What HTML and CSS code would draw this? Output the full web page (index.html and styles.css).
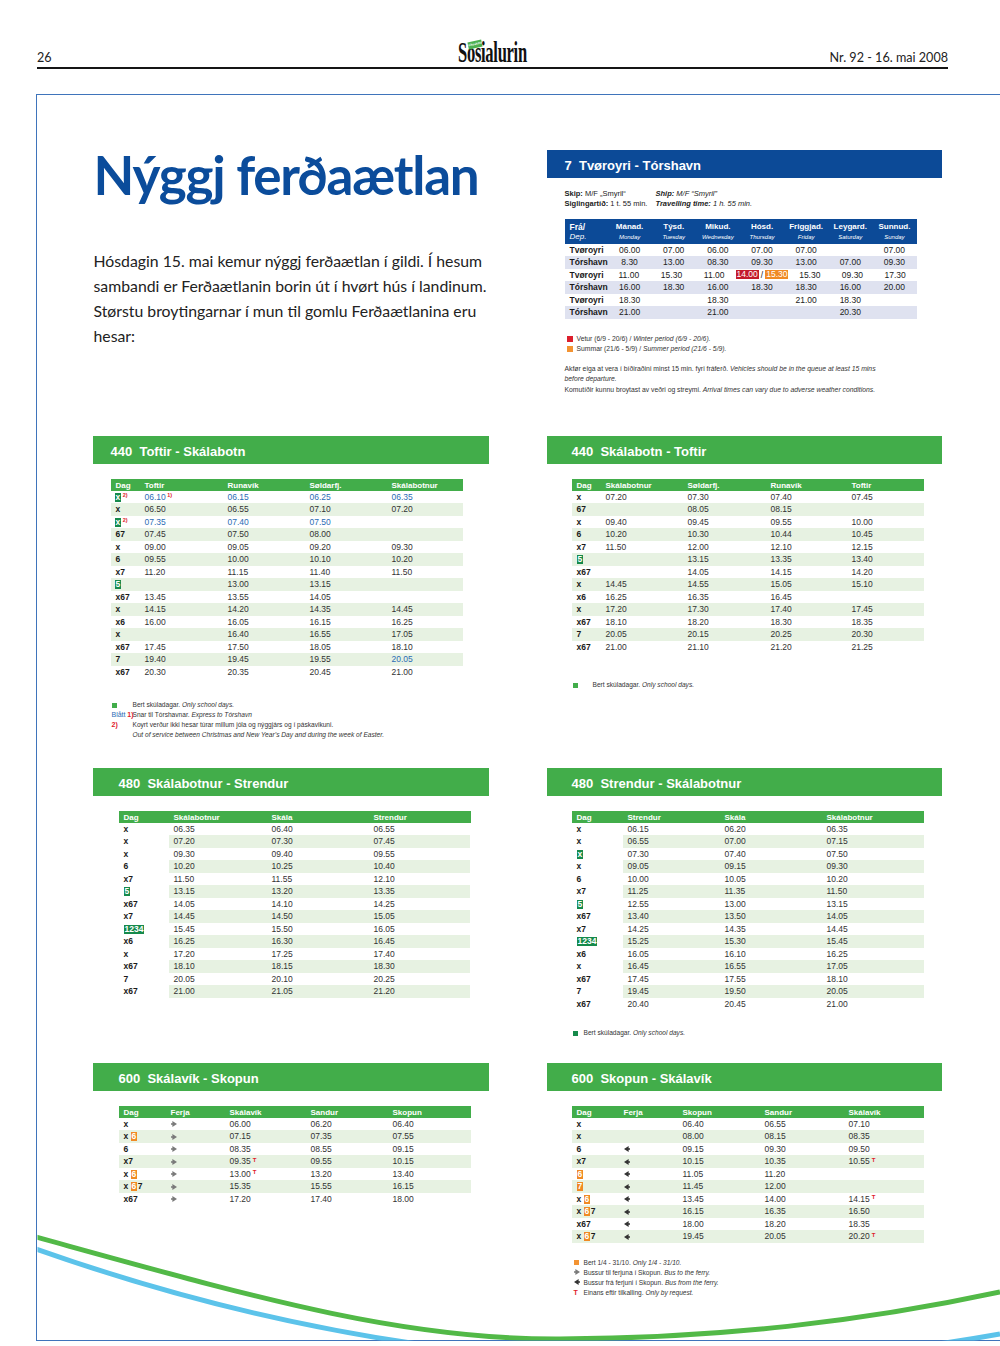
FILE: index.html
```html
<!DOCTYPE html>
<html lang="fo">
<head>
<meta charset="utf-8">
<title>Nýggj ferðaætlan</title>
<link rel="stylesheet" href="styles.css">
</head>
<body>
<div class="page">
  <header class="top">
    <span class="pno">26</span>
    <div class="logo"><span class="logo-word">Sosialurin</span><span class="logo-tag">Vikuskiftis</span></div>
    <span class="issue">Nr. 92 - 16. mai 2008</span>
  </header>

  <main class="frame">
    <div class="grid">
      <!-- intro -->
      <section class="intro">
        <h1 class="title">Nýggj ferðaætlan</h1>
        <p class="lead">Hósdagin 15. mai kemur nýggj ferðaætlan í gildi. Í hesum<br>sambandi er Ferðaætlanin borin út í hvørt hús í landinum.<br>Størstu broytingarnar í mun til gomlu Ferðaætlanina eru<br>hesar:</p>
      </section>

      <!-- ferry -->
      <section class="ferry">
        <div class="bar blue pad18">7  Tvøroyri - Tórshavn</div>
        <div class="inner">
          <div class="skip">
            <span><b>Skip:</b> M/F „Smyril“</span><span class="it"><b>Ship:</b> M/F “Smyril”</span>
            <span><b>Siglingartíð:</b> 1 t. 55 min.</span><span class="it"><b>Travelling time:</b> 1 h. 55 min.</span>
          </div>
          <div class="ft">
            <div class="hd">
              <span class="c0">Frá/<i>Dep.</i></span>
              <span>Mánad.<i>Monday</i></span>
              <span>Týsd.<i>Tuesday</i></span>
              <span>Mikud.<i>Wednesday</i></span>
              <span>Hósd.<i>Thursday</i></span>
              <span>Friggjad.<i>Friday</i></span>
              <span>Leygard.<i>Saturday</i></span>
              <span>Sunnud.<i>Sunday</i></span>
            </div>
            <div class="rows">
              <div class="r"><span class="c">Tvøroyri</span><span>06.00</span><span>07.00</span><span>06.00</span><span>07.00</span><span>07.00</span><span></span><span>07.00</span></div>
              <div class="r"><span class="c">Tórshavn</span><span>8.30</span><span>13.00</span><span>08.30</span><span>09.30</span><span>13.00</span><span>07.00</span><span>09.30</span></div>
              <div class="r"><span class="c">Tvøroyri</span><span>11.00</span><span>15.30</span><span>11.00</span><span class="wide"><span class="hl red">14.00</span>/<span class="hl org">15.30</span></span><span>15.30</span><span>09.30</span><span>17.30</span></div>
              <div class="r"><span class="c">Tórshavn</span><span>16.00</span><span>18.30</span><span>16.00</span><span>18.30</span><span>18.30</span><span>16.00</span><span>20.00</span></div>
              <div class="r"><span class="c">Tvøroyri</span><span>18.30</span><span></span><span>18.30</span><span></span><span>21.00</span><span>18.30</span><span></span></div>
              <div class="r"><span class="c">Tórshavn</span><span>21.00</span><span></span><span>21.00</span><span></span><span></span><span>20.30</span><span></span></div>
            </div>
          </div>
          <div class="lg">
            <div class="l"><span class="sq sq-red"></span><span>Vetur (6/9 - 20/6) / <i>Winter period (6/9 - 20/6).</i></span></div>
            <div class="l"><span class="sq sq-org"></span><span>Summar (21/6 - 5/9) / <i>Summer period (21/6 - 5/9).</i></span></div>
          </div>
          <div class="notes">
            <p>Akfør eiga at vera í bíðiraðini minst 15 min. fyri fráferð. <i>Vehicles should be in the queue at least 15 mins<br>before departure.</i></p>
            <p class="n2">Komutíðir kunnu broytast av veðri og streymi. <i>Arrival times can vary due to adverse weather conditions.</i></p>
          </div>
        </div>
      </section>

      <!-- 440 left -->
      <section class="route">
        <div class="bar green pad18">440  Toftir - Skálabotn</div>
        <div class="tb g440l ml18 stripe-all">
          <div class="r hd"><span class="c">Dag</span><span class="c">Toftir</span><span class="c">Runavík</span><span class="c">Søldarfj.</span><span class="c">Skálabotnur</span></div>
          <div class="rows">
            <div class="r"><span class="c d"><span class="bg">x</span><span class="sup">2)</span></span><span class="c bl">06.10<span class="sup">1)</span></span><span class="c bl">06.15</span><span class="c bl">06.25</span><span class="c bl">06.35</span></div>
            <div class="r"><span class="c d">x</span><span class="c">06.50</span><span class="c">06.55</span><span class="c">07.10</span><span class="c">07.20</span></div>
            <div class="r"><span class="c d"><span class="bg">x</span><span class="sup">2)</span></span><span class="c bl">07.35</span><span class="c bl">07.40</span><span class="c bl">07.50</span><span class="c"></span></div>
            <div class="r"><span class="c d">67</span><span class="c">07.45</span><span class="c">07.50</span><span class="c">08.00</span><span class="c"></span></div>
            <div class="r"><span class="c d">x</span><span class="c">09.00</span><span class="c">09.05</span><span class="c">09.20</span><span class="c">09.30</span></div>
            <div class="r"><span class="c d">6</span><span class="c">09.55</span><span class="c">10.00</span><span class="c">10.10</span><span class="c">10.20</span></div>
            <div class="r"><span class="c d">x7</span><span class="c">11.20</span><span class="c">11.15</span><span class="c">11.40</span><span class="c">11.50</span></div>
            <div class="r"><span class="c d"><span class="bg">5</span></span><span class="c"></span><span class="c">13.00</span><span class="c">13.15</span><span class="c"></span></div>
            <div class="r"><span class="c d">x67</span><span class="c">13.45</span><span class="c">13.55</span><span class="c">14.05</span><span class="c"></span></div>
            <div class="r"><span class="c d">x</span><span class="c">14.15</span><span class="c">14.20</span><span class="c">14.35</span><span class="c">14.45</span></div>
            <div class="r"><span class="c d">x6</span><span class="c">16.00</span><span class="c">16.05</span><span class="c">16.15</span><span class="c">16.25</span></div>
            <div class="r"><span class="c d">x</span><span class="c"></span><span class="c">16.40</span><span class="c">16.55</span><span class="c">17.05</span></div>
            <div class="r"><span class="c d">x67</span><span class="c">17.45</span><span class="c">17.50</span><span class="c">18.05</span><span class="c">18.10</span></div>
            <div class="r"><span class="c d">7</span><span class="c">19.40</span><span class="c">19.45</span><span class="c">19.55</span><span class="c bl">20.05</span></div>
            <div class="r"><span class="c d">x67</span><span class="c">20.30</span><span class="c">20.35</span><span class="c">20.45</span><span class="c">21.00</span></div>
          </div>
        </div>
        <div class="fn fn440l">
          <div class="l"><span><span class="sq sq-lg"></span></span><span>Bert skúladagar. <i>Only school days.</i></span></div>
          <div class="l"><span class="nw"><span class="blt">Blått</span> <span class="ref">1)</span></span><span>Snar til Tórshavnar. <i>Express to Tórshavn</i></span></div>
          <div class="l"><span class="ref">2)</span><span>Koyrt verður ikki hesar túrar millum jóla og nýggjárs og í páskavikuni.</span></div>
          <div class="l"><span></span><span><i>Out of service between Christmas and New Year’s Day and during the week of Easter.</i></span></div>
        </div>
      </section>

      <!-- 440 right -->
      <section class="route">
        <div class="bar green pad25">440  Skálabotn - Toftir</div>
        <div class="tb g440r ml25 stripe-all">
          <div class="r hd"><span class="c">Dag</span><span class="c">Skálabotnur</span><span class="c">Søldarfj.</span><span class="c">Runavík</span><span class="c">Toftir</span></div>
          <div class="rows">
            <div class="r"><span class="c d">x</span><span class="c">07.20</span><span class="c">07.30</span><span class="c">07.40</span><span class="c">07.45</span></div>
            <div class="r"><span class="c d">67</span><span class="c"></span><span class="c">08.05</span><span class="c">08.15</span><span class="c"></span></div>
            <div class="r"><span class="c d">x</span><span class="c">09.40</span><span class="c">09.45</span><span class="c">09.55</span><span class="c">10.00</span></div>
            <div class="r"><span class="c d">6</span><span class="c">10.20</span><span class="c">10.30</span><span class="c">10.44</span><span class="c">10.45</span></div>
            <div class="r"><span class="c d">x7</span><span class="c">11.50</span><span class="c">12.00</span><span class="c">12.10</span><span class="c">12.15</span></div>
            <div class="r"><span class="c d"><span class="bg">5</span></span><span class="c"></span><span class="c">13.15</span><span class="c">13.35</span><span class="c">13.40</span></div>
            <div class="r"><span class="c d">x67</span><span class="c"></span><span class="c">14.05</span><span class="c">14.15</span><span class="c">14.20</span></div>
            <div class="r"><span class="c d">x</span><span class="c">14.45</span><span class="c">14.55</span><span class="c">15.05</span><span class="c">15.10</span></div>
            <div class="r"><span class="c d">x6</span><span class="c">16.25</span><span class="c">16.35</span><span class="c">16.45</span><span class="c"></span></div>
            <div class="r"><span class="c d">x</span><span class="c">17.20</span><span class="c">17.30</span><span class="c">17.40</span><span class="c">17.45</span></div>
            <div class="r"><span class="c d">x67</span><span class="c">18.10</span><span class="c">18.20</span><span class="c">18.30</span><span class="c">18.35</span></div>
            <div class="r"><span class="c d">7</span><span class="c">20.05</span><span class="c">20.15</span><span class="c">20.25</span><span class="c">20.30</span></div>
            <div class="r"><span class="c d">x67</span><span class="c">21.00</span><span class="c">21.10</span><span class="c">21.20</span><span class="c">21.25</span></div>
          </div>
        </div>
        <div class="fn fn440r">
          <div class="l"><span><span class="sq sq-lg"></span></span><span>Bert skúladagar. <i>Only school days.</i></span></div>
        </div>
      </section>

      <!-- 480 left -->
      <section class="route">
        <div class="bar green pad26">480  Skálabotnur - Strendur</div>
        <div class="tb g480l ml26 stripe-data">
          <div class="r hd"><span class="c">Dag</span><span class="c">Skálabotnur</span><span class="c">Skála</span><span class="c">Strendur</span></div>
          <div class="rows">
            <div class="r"><span class="c d">x</span><span class="c">06.35</span><span class="c">06.40</span><span class="c">06.55</span></div>
            <div class="r"><span class="c d">x</span><span class="c">07.20</span><span class="c">07.30</span><span class="c">07.45</span></div>
            <div class="r"><span class="c d">x</span><span class="c">09.30</span><span class="c">09.40</span><span class="c">09.55</span></div>
            <div class="r"><span class="c d">6</span><span class="c">10.20</span><span class="c">10.25</span><span class="c">10.40</span></div>
            <div class="r"><span class="c d">x7</span><span class="c">11.50</span><span class="c">11.55</span><span class="c">12.10</span></div>
            <div class="r"><span class="c d"><span class="bg">5</span></span><span class="c">13.15</span><span class="c">13.20</span><span class="c">13.35</span></div>
            <div class="r"><span class="c d">x67</span><span class="c">14.05</span><span class="c">14.10</span><span class="c">14.25</span></div>
            <div class="r"><span class="c d">x7</span><span class="c">14.45</span><span class="c">14.50</span><span class="c">15.05</span></div>
            <div class="r"><span class="c d"><span class="bg">1234</span></span><span class="c">15.45</span><span class="c">15.50</span><span class="c">16.05</span></div>
            <div class="r"><span class="c d">x6</span><span class="c">16.25</span><span class="c">16.30</span><span class="c">16.45</span></div>
            <div class="r"><span class="c d">x</span><span class="c">17.20</span><span class="c">17.25</span><span class="c">17.40</span></div>
            <div class="r"><span class="c d">x67</span><span class="c">18.10</span><span class="c">18.15</span><span class="c">18.30</span></div>
            <div class="r"><span class="c d">7</span><span class="c">20.05</span><span class="c">20.10</span><span class="c">20.25</span></div>
            <div class="r"><span class="c d">x67</span><span class="c">21.00</span><span class="c">21.05</span><span class="c">21.20</span></div>
          </div>
        </div>
      </section>

      <!-- 480 right -->
      <section class="route">
        <div class="bar green pad25">480  Strendur - Skálabotnur</div>
        <div class="tb g480r ml25 stripe-data">
          <div class="r hd"><span class="c">Dag</span><span class="c">Strendur</span><span class="c">Skála</span><span class="c">Skálabotnur</span></div>
          <div class="rows">
            <div class="r"><span class="c d">x</span><span class="c">06.15</span><span class="c">06.20</span><span class="c">06.35</span></div>
            <div class="r"><span class="c d">x</span><span class="c">06.55</span><span class="c">07.00</span><span class="c">07.15</span></div>
            <div class="r"><span class="c d"><span class="bg">x</span></span><span class="c">07.30</span><span class="c">07.40</span><span class="c">07.50</span></div>
            <div class="r"><span class="c d">x</span><span class="c">09.05</span><span class="c">09.15</span><span class="c">09.30</span></div>
            <div class="r"><span class="c d">6</span><span class="c">10.00</span><span class="c">10.05</span><span class="c">10.20</span></div>
            <div class="r"><span class="c d">x7</span><span class="c">11.25</span><span class="c">11.35</span><span class="c">11.50</span></div>
            <div class="r"><span class="c d"><span class="bg">5</span></span><span class="c">12.55</span><span class="c">13.00</span><span class="c">13.15</span></div>
            <div class="r"><span class="c d">x67</span><span class="c">13.40</span><span class="c">13.50</span><span class="c">14.05</span></div>
            <div class="r"><span class="c d">x7</span><span class="c">14.25</span><span class="c">14.35</span><span class="c">14.45</span></div>
            <div class="r"><span class="c d"><span class="bg">1234</span></span><span class="c">15.25</span><span class="c">15.30</span><span class="c">15.45</span></div>
            <div class="r"><span class="c d">x6</span><span class="c">16.05</span><span class="c">16.10</span><span class="c">16.25</span></div>
            <div class="r"><span class="c d">x</span><span class="c">16.45</span><span class="c">16.55</span><span class="c">17.05</span></div>
            <div class="r"><span class="c d">x67</span><span class="c">17.45</span><span class="c">17.55</span><span class="c">18.10</span></div>
            <div class="r"><span class="c d">7</span><span class="c">19.45</span><span class="c">19.50</span><span class="c">20.05</span></div>
            <div class="r"><span class="c d">x67</span><span class="c">20.40</span><span class="c">20.45</span><span class="c">21.00</span></div>
          </div>
        </div>
        <div class="fn fn480r">
          <div class="l"><span><span class="sq sq-dg"></span></span><span>Bert skúladagar. <i>Only school days.</i></span></div>
        </div>
      </section>

      <!-- 600 left -->
      <section class="route">
        <div class="bar green pad26">600  Skálavík - Skopun</div>
        <div class="tb g600l ml26 stripe-all">
          <div class="r hd"><span class="c">Dag</span><span class="c">Ferja</span><span class="c">Skálavík</span><span class="c">Sandur</span><span class="c">Skopun</span></div>
          <div class="rows">
            <div class="r"><span class="c d">x</span><span class="c"><svg class="ar ar-r" viewBox="0 0 7 7"><path d="M0 2.6h1.6V0L7 3.5 1.6 7V4.4H0z"/></svg></span><span class="c">06.00</span><span class="c">06.20</span><span class="c">06.40</span></div>
            <div class="r"><span class="c d">x <span class="bo">6</span></span><span class="c"><svg class="ar ar-r" viewBox="0 0 7 7"><path d="M0 2.6h1.6V0L7 3.5 1.6 7V4.4H0z"/></svg></span><span class="c">07.15</span><span class="c">07.35</span><span class="c">07.55</span></div>
            <div class="r"><span class="c d">6</span><span class="c"><svg class="ar ar-r" viewBox="0 0 7 7"><path d="M0 2.6h1.6V0L7 3.5 1.6 7V4.4H0z"/></svg></span><span class="c">08.35</span><span class="c">08.55</span><span class="c">09.15</span></div>
            <div class="r"><span class="c d">x7</span><span class="c"><svg class="ar ar-r" viewBox="0 0 7 7"><path d="M0 2.6h1.6V0L7 3.5 1.6 7V4.4H0z"/></svg></span><span class="c">09.35<span class="tt">T</span></span><span class="c">09.55</span><span class="c">10.15</span></div>
            <div class="r"><span class="c d">x <span class="bo">6</span></span><span class="c"><svg class="ar ar-r" viewBox="0 0 7 7"><path d="M0 2.6h1.6V0L7 3.5 1.6 7V4.4H0z"/></svg></span><span class="c">13.00<span class="tt">T</span></span><span class="c">13.20</span><span class="c">13.40</span></div>
            <div class="r"><span class="c d">x <span class="bo">6</span>7</span><span class="c"><svg class="ar ar-r" viewBox="0 0 7 7"><path d="M0 2.6h1.6V0L7 3.5 1.6 7V4.4H0z"/></svg></span><span class="c">15.35</span><span class="c">15.55</span><span class="c">16.15</span></div>
            <div class="r"><span class="c d">x67</span><span class="c"><svg class="ar ar-r" viewBox="0 0 7 7"><path d="M0 2.6h1.6V0L7 3.5 1.6 7V4.4H0z"/></svg></span><span class="c">17.20</span><span class="c">17.40</span><span class="c">18.00</span></div>
          </div>
        </div>
      </section>

      <!-- 600 right -->
      <section class="route">
        <div class="bar green pad25">600  Skopun - Skálavík</div>
        <div class="tb g600r ml25 stripe-all">
          <div class="r hd"><span class="c">Dag</span><span class="c">Ferja</span><span class="c">Skopun</span><span class="c">Sandur</span><span class="c">Skálavík</span></div>
          <div class="rows">
            <div class="r"><span class="c d">x</span><span class="c"></span><span class="c">06.40</span><span class="c">06.55</span><span class="c">07.10</span></div>
            <div class="r"><span class="c d">x</span><span class="c"></span><span class="c">08.00</span><span class="c">08.15</span><span class="c">08.35</span></div>
            <div class="r"><span class="c d">6</span><span class="c"><svg class="ar ar-l" viewBox="0 0 7 7"><path d="M7 2.6H5.4V0L0 3.5 5.4 7V4.4H7z"/></svg></span><span class="c">09.15</span><span class="c">09.30</span><span class="c">09.50</span></div>
            <div class="r"><span class="c d">x7</span><span class="c"><svg class="ar ar-l" viewBox="0 0 7 7"><path d="M7 2.6H5.4V0L0 3.5 5.4 7V4.4H7z"/></svg></span><span class="c">10.15</span><span class="c">10.35</span><span class="c">10.55<span class="tt">T</span></span></div>
            <div class="r"><span class="c d"><span class="bo">6</span></span><span class="c"><svg class="ar ar-l" viewBox="0 0 7 7"><path d="M7 2.6H5.4V0L0 3.5 5.4 7V4.4H7z"/></svg></span><span class="c">11.05</span><span class="c">11.20</span><span class="c"></span></div>
            <div class="r"><span class="c d"><span class="bo">7</span></span><span class="c"><svg class="ar ar-l" viewBox="0 0 7 7"><path d="M7 2.6H5.4V0L0 3.5 5.4 7V4.4H7z"/></svg></span><span class="c">11.45</span><span class="c">12.00</span><span class="c"></span></div>
            <div class="r"><span class="c d">x <span class="bo">6</span></span><span class="c"><svg class="ar ar-l" viewBox="0 0 7 7"><path d="M7 2.6H5.4V0L0 3.5 5.4 7V4.4H7z"/></svg></span><span class="c">13.45</span><span class="c">14.00</span><span class="c">14.15<span class="tt">T</span></span></div>
            <div class="r"><span class="c d">x <span class="bo">6</span>7</span><span class="c"><svg class="ar ar-l" viewBox="0 0 7 7"><path d="M7 2.6H5.4V0L0 3.5 5.4 7V4.4H7z"/></svg></span><span class="c">16.15</span><span class="c">16.35</span><span class="c">16.50</span></div>
            <div class="r"><span class="c d">x67</span><span class="c"><svg class="ar ar-l" viewBox="0 0 7 7"><path d="M7 2.6H5.4V0L0 3.5 5.4 7V4.4H7z"/></svg></span><span class="c">18.00</span><span class="c">18.20</span><span class="c">18.35</span></div>
            <div class="r"><span class="c d">x <span class="bo">6</span>7</span><span class="c"><svg class="ar ar-l" viewBox="0 0 7 7"><path d="M7 2.6H5.4V0L0 3.5 5.4 7V4.4H7z"/></svg></span><span class="c">19.45</span><span class="c">20.05</span><span class="c">20.20<span class="tt">T</span></span></div>
          </div>
        </div>
        <div class="fn fn600r">
          <div class="l"><span><span class="sq sq-org2"></span></span><span>Bert 1/4 - 31/10. <i>Only 1/4 - 31/10.</i></span></div>
          <div class="l"><span><svg class="ar ar-r" viewBox="0 0 7 7"><path d="M0 2.6h1.6V0L7 3.5 1.6 7V4.4H0z"/></svg></span><span>Bussur til ferjuna í Skopun. <i>Bus to the ferry.</i></span></div>
          <div class="l"><span><svg class="ar ar-l" viewBox="0 0 7 7"><path d="M7 2.6H5.4V0L0 3.5 5.4 7V4.4H7z"/></svg></span><span>Bussur frá ferjuni í Skopun. <i>Bus from the ferry.</i></span></div>
          <div class="l"><span class="tref">T</span><span>Einans eftir tilkalling.  <i>Only by request.</i></span></div>
        </div>
      </section>
    </div>
  </main>

  <svg class="curves" viewBox="0 0 1000 1346" aria-hidden="true">
    <defs>
      <clipPath id="frameclip"><rect x="37.5" y="95.5" width="962.5" height="1245"/></clipPath>
    </defs>
    <g clip-path="url(#frameclip)" fill="none" stroke-width="5" stroke-linecap="butt">
      <path d="M36 1249 Q 520 1420 1000 1334" stroke="#5cc3ea"/>
      <path d="M36 1237 C 250 1296 400 1340 560 1339 C 720 1338 860 1322 1000 1292" stroke="#52b947"/>
    </g>
  </svg>
</div>
</body>
</html>
```

FILE: styles.css
```css
* { box-sizing: border-box; }
html, body { margin: 0; padding: 0; background: #fff; }
body { font-family: "Liberation Sans", Arial, sans-serif; color: #222; }

.page { position: relative; width: 1000px; height: 1346px; overflow: hidden; }

/* ---------- page header ---------- */
.top {
  display: grid;
  grid-template-columns: 1fr auto 1fr;
  align-items: end;
  margin-left: 37px;
  width: 911px;
  height: 69px;
  padding-bottom: 3px;
  border-bottom: 2px solid #151515;
  font-family: Lato, "Open Sans", sans-serif;
  font-size: 12.6px;
  line-height: 13px;
  color: #222;
}
.issue { justify-self: end; }
.logo { position: relative; width: 70px; height: 24px; }
.logo-word {
  display: block;
  font-family: "Liberation Serif", "Times New Roman", serif;
  font-weight: 700;
  font-size: 29px;
  line-height: 24px;
  letter-spacing: -0.5px;
  white-space: nowrap;
  color: #111;
  transform: scaleX(0.57);
  transform-origin: 0 50%;
}
.logo-tag {
  position: absolute;
  left: 10px;
  top: 1px;
  width: 14px;
  height: 7px;
  background: #4cb050;
  color: #fff;
  font-family: "Liberation Sans", sans-serif;
  font-weight: 700;
  font-size: 3px;
  line-height: 7px;
  text-align: center;
  overflow: hidden;
  transform: rotate(-12deg);
}

/* ---------- frame ---------- */
.frame {
  position: relative;
  margin: 25px 0 0 36px;
  width: 964px;
  height: 1247px;
  border: 1.5px solid #3f74bb;
  border-right: 0;
  padding: 54.5px 0 0 55.5px;
}
.grid {
  display: grid;
  grid-template-columns: 396px 395px;
  column-gap: 58px;
  grid-template-rows: 286px 332px 295px auto;
}

/* ---------- intro ---------- */
.title {
  margin: 0 0 0 1px;
  font-family: Lato, "Open Sans", sans-serif;
  font-weight: 700;
  font-size: 53px;
  line-height: 50px;
  letter-spacing: -1.2px;
  color: #0b4c9b;
  white-space: nowrap;
}
.lead {
  margin: 48px 0 0 1px;
  font-family: Lato, "Open Sans", sans-serif;
  font-size: 15.8px;
  line-height: 25px;
  color: #222;
  white-space: nowrap;
}

/* ---------- bars ---------- */
.bar {
  height: 28px;
  padding-top: 4px;
  line-height: 24px;
  font-family: "Liberation Sans", Arial, sans-serif;
  font-weight: 700;
  font-size: 13px;
  color: #fff;
  white-space: pre;
}
.bar.blue { background: #0c4a97; }
.bar.green { background: #42ad4a; }
.pad18 { padding-left: 18px; }
.pad25 { padding-left: 25px; }
.pad26 { padding-left: 26px; }

/* ---------- small condensed text ---------- */
.skip, .ft, .lg, .notes, .tb, .fn {
  font-family: "Liberation Sans Narrow", "Liberation Sans", Arial, sans-serif;
}

/* ---------- ferry ---------- */
.ferry .inner { padding-left: 18px; }
.skip {
  margin-top: 11px;
  display: grid;
  grid-template-columns: 91px auto;
  font-size: 7.5px;
  line-height: 10px;
  color: #222;
  white-space: nowrap;
}
.skip .it { font-style: italic; }

.ft { margin-top: 10px; width: 352px; font-size: 8.5px; color: #222; }
.ft .hd, .ft .r {
  display: grid;
  grid-template-columns: 43px repeat(7, 1fr);
}
.ft .hd {
  height: 25px;
  padding-top: 3px;
  background: #0c4a97;
  color: #fff;
  font-weight: 700;
  font-size: 8px;
  text-align: center;
  line-height: 10px;
}
.ft .hd i {
  display: block;
  font-weight: 400;
  font-size: 6px;
  line-height: 10px;
}
.ft .hd .c0 { text-align: left; padding-left: 5px; font-size: 8.5px; }
.ft .hd .c0 i { font-size: 8px; font-weight: 400; }
.ft .r {
  height: 12.5px;
  line-height: 12.5px;
  text-align: center;
  white-space: nowrap;
}
.ft .r .c { text-align: left; padding-left: 5px; font-weight: 700; color: #1a1a1a; }
.ft .rows .r:nth-child(even) { background: #dfe2f0; }
.ft .wide { display: flex; justify-content: center; align-items: center; gap: 2px; }
.hl { display: inline-block; color: #fff; line-height: 9px; padding: 0 1px; }
.hl.red { background: #c41b2b; }
.hl.org { background: #f08a24; }

.lg { margin-top: 15px; padding-left: 2px; font-size: 6.8px; line-height: 10px; color: #333; }
.lg .l, .fn .l { display: grid; align-items: center; white-space: nowrap; }
.lg .l { grid-template-columns: 10px auto; }
.sq { display: inline-block; width: 5px; height: 5px; vertical-align: middle; }
.sq-red { background: #dc1f2c; width: 6px; height: 6px; }
.sq-org { background: #f39332; width: 6px; height: 6px; }
.sq-lg { background: #42ad4a; }
.sq-dg { background: #168a4b; }
.sq-org2 { background: #f39332; }

.notes { margin-top: 10.5px; font-size: 6.8px; line-height: 10px; color: #333; white-space: nowrap; }
.notes p { margin: 0; }
.notes .n2 { margin-top: 1px; }

/* ---------- route tables ---------- */
.tb { margin-top: 15px; width: 352px; font-size: 8.5px; color: #333; }
.ml18 { margin-left: 18px; }
.ml25 { margin-left: 25px; }
.ml26 { margin-left: 26px; }
.tb .r { display: grid; }
.tb .r .c { padding-left: 5px; white-space: nowrap; }
.tb .hd {
  height: 12px;
  line-height: 13px;
  background: #42ad4a;
  color: #fff;
  font-weight: 700;
  font-size: 8px;
}
.tb .rows .r { height: 12.5px; line-height: 12.5px; }
.tb .d { font-weight: 700; color: #1a1a1a; }
.stripe-all .rows .r:nth-child(even) { background: #e7f2e2; }
.stripe-data .rows .r:nth-child(even) .c:not(:first-child) { background: #e7f2e2; }

.g440l .r { grid-template-columns: 29px 83px 82px 82px 76px; }
.g440r .r { grid-template-columns: 29px 82px 83px 81px 77px; }
.g480l .r { grid-template-columns: 50px 98px 102px 101px; }
.g480r .r { grid-template-columns: 51px 97px 102px 102px; }
.g600l .r { grid-template-columns: 47px 59px 81px 82px 83px; }
.g600r .r { grid-template-columns: 47px 59px 82px 84px 80px; }

.bg, .bo {
  display: inline-block;
  color: #fff;
  font-weight: 700;
  line-height: 9px;
  padding: 0 1px;
}
.bg { background: #168a4b; }
.bo { background: #f08a24; margin-right: 0.5px; }
.g440l .bg { margin-left: -1px; }
.bl { color: #2b6cb5; }
.sup {
  color: #e0202a;
  font-size: 5.5px;
  line-height: 0;
  vertical-align: 2.5px;
  margin-left: 1.5px;
  font-weight: 700;
}
.tt {
  color: #e0202a;
  font-size: 6px;
  font-weight: 700;
  line-height: 0;
  vertical-align: 2.5px;
  margin-left: 2px;
}
.ar { display: inline-block; width: 6px; height: 6px; vertical-align: -0.5px; }
.ar-r { fill: #7a7a7a; }
.ar-l { fill: #333; }

/* ---------- footnotes ---------- */
.fn { font-size: 6.6px; line-height: 10px; color: #333; }
.fn440l { margin: 22px 0 0 19px; }
.fn440l .l { grid-template-columns: 21px auto; }
.fn440r { margin: 27px 0 0 26px; }
.fn440r .l { grid-template-columns: 20px auto; }
.fn480r { margin: 18px 0 0 26px; }
.fn480r .l { grid-template-columns: 11px auto; }
.fn600r { margin: 15px 0 0 27px; }
.fn600r .l { grid-template-columns: 10px auto; }
.nw { white-space: nowrap; }
.blt { color: #2b6cb5; font-size: 7px; }
.ref { color: #e0202a; font-weight: 700; font-size: 7px; }
.tref { color: #e0202a; font-weight: 700; font-size: 7px; }

/* ---------- decorative curves ---------- */
.curves {
  position: absolute;
  left: 0;
  top: 0;
  width: 1000px;
  height: 1346px;
  pointer-events: none;
}
```
